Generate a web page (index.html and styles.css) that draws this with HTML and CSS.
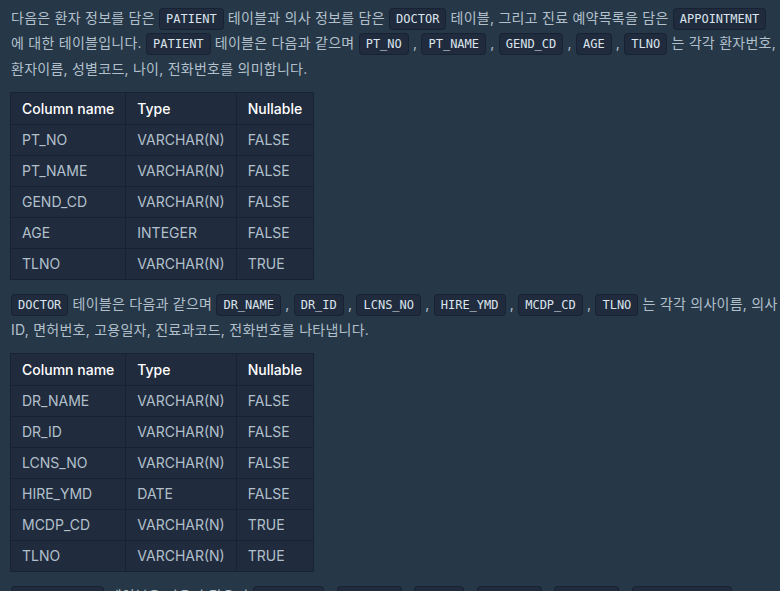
FILE: index.html
```html
<!DOCTYPE html>
<html lang="ko">
<head>
    <meta charset="UTF-8">
    <meta name="viewport" content="width=device-width, initial-scale=1.0">
    <title>문제 설명</title>
    <link rel="stylesheet" href="styles.css">
</head>
<body>
    <div class="guide">
        <p>다음은 환자 정보를 담은 <code>PATIENT</code> 테이블과 의사 정보를 담은 <code>DOCTOR</code> 테이블, 그리고 진료 예약목록을 담은 <code>APPOINTMENT</code> 에 대한 테이블입니다. <code>PATIENT</code> 테이블은 다음과 같으며 <code>PT_NO</code> , <code>PT_NAME</code> , <code>GEND_CD</code> , <code>AGE</code> , <code>TLNO</code> 는 각각 환자번호, 환자이름, 성별코드, 나이, 전화번호를 의미합니다.</p>

        <table>
            <thead>
                <tr><th>Column name</th><th>Type</th><th>Nullable</th></tr>
            </thead>
            <tbody>
                <tr><td>PT_NO</td><td>VARCHAR(N)</td><td>FALSE</td></tr>
                <tr><td>PT_NAME</td><td>VARCHAR(N)</td><td>FALSE</td></tr>
                <tr><td>GEND_CD</td><td>VARCHAR(N)</td><td>FALSE</td></tr>
                <tr><td>AGE</td><td>INTEGER</td><td>FALSE</td></tr>
                <tr><td>TLNO</td><td>VARCHAR(N)</td><td>TRUE</td></tr>
            </tbody>
        </table>

        <p><code>DOCTOR</code> 테이블은 다음과 같으며 <code>DR_NAME</code> , <code>DR_ID</code> , <code>LCNS_NO</code> , <code>HIRE_YMD</code> , <code>MCDP_CD</code> , <code>TLNO</code> 는 각각 의사이름, 의사 ID, 면허번호, 고용일자, 진료과코드, 전화번호를 나타냅니다.</p>

        <table>
            <thead>
                <tr><th>Column name</th><th>Type</th><th>Nullable</th></tr>
            </thead>
            <tbody>
                <tr><td>DR_NAME</td><td>VARCHAR(N)</td><td>FALSE</td></tr>
                <tr><td>DR_ID</td><td>VARCHAR(N)</td><td>FALSE</td></tr>
                <tr><td>LCNS_NO</td><td>VARCHAR(N)</td><td>FALSE</td></tr>
                <tr><td>HIRE_YMD</td><td>DATE</td><td>FALSE</td></tr>
                <tr><td>MCDP_CD</td><td>VARCHAR(N)</td><td>TRUE</td></tr>
                <tr><td>TLNO</td><td>VARCHAR(N)</td><td>TRUE</td></tr>
            </tbody>
        </table>

        <p><code>APPOINTMENT</code> 테이블은 다음과 같으며 <code>APNT_YMD</code> , <code>APNT_NO</code> , <code>PT_NO</code> , <code>MCDP_CD</code> , <code>MDDR_ID</code> , <code>APNT_CNCL_YN</code> , <code>APNT_CNCL_YMD</code> 는 각각 진료예약일시, 진료예약번호, 환자번호, 진료과코드, 의사 ID, 예약취소여부, 예약취소날짜를 나타냅니다.</p>
    </div>
</body>
</html>
```

FILE: styles.css
```css
body {
    margin: 0;
    background: #263747;
    color: #b2c0cc;
    font-family: Inter, "Noto Sans CJK KR", sans-serif;
    font-size: 14px;
}
.guide {
    padding: 4.5px 0 0 11px;
}
p {
    margin: 0 0 11px;
    line-height: 25.5px;
    word-break: keep-all;
    letter-spacing: 0.25px;
}
code {
    font-family: "DejaVu Sans Mono", monospace;
    font-size: 12px;
    line-height: 1;
    padding: 3px 6px;
    color: #dbe3ec;
    background: #202b3d;
    border: 1px solid #172334;
    border-radius: 4px;
    white-space: nowrap;
    letter-spacing: 0;
}
table {
    border-collapse: collapse;
    background: #202b3d;
    margin: 0 0 11px -1px;
    font-size: 14px;
    line-height: 20px;
}
th, td {
    border: 1px solid #172334;
    text-align: left;
    padding: 5px 11px 5px 11px;
}
th {
    color: #fff;
    font-weight: 500;
    padding-top: 6px;
}
td {
    color: #b2c0cc;
}
```
